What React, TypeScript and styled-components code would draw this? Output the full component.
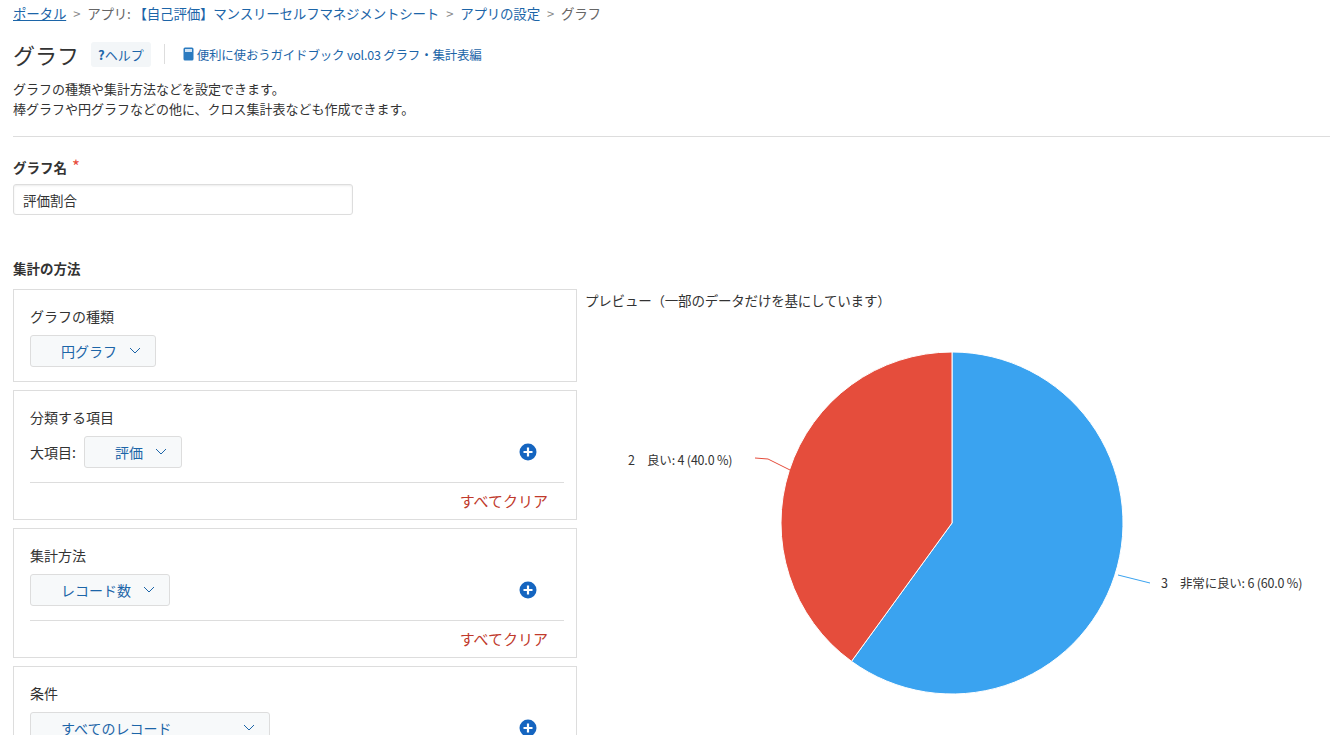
import React from "react";
import styled, { createGlobalStyle } from "styled-components";

const G = createGlobalStyle`
  body { margin:0; font-family: "Noto Sans CJK JP","Noto Sans",sans-serif; color:#333; background:#fff; }
`;
const Page = styled.div`padding: 0 0 0 13px; height:735px; overflow:hidden;`;
const Crumbs = styled.div`font-size:13.5px; height:26px; display:flex; align-items:center; gap:7px; color:#666; letter-spacing:-0.2px;`;
const Link = styled.a<{u?:boolean}>`color:#1c65a8; text-decoration:${p=>p.u?"underline":"none"};`;
const Sep = styled.span`color:#888; font-size:13px;`;
const TitleRow = styled.div`display:flex; align-items:center; margin-top:10px; height:36px;`;
const H1 = styled.h1`font-size:22px; font-weight:400; margin:0 12px 0 0; color:#333;`;
const Help = styled.span`background:#f3f6f8; color:#1c65a8; font-size:13px; padding:3px 7px; border-radius:3px;`;
const VSep = styled.span`width:1px; height:20px; background:#ddd; margin:0 18px 0 13px;`;
const Guide = styled.span`color:#1c65a8; font-size:12.5px; display:flex; align-items:center; gap:3px; letter-spacing:-0.2px;`;
const Desc = styled.p`font-size:13px; line-height:20px; margin:7px 0 0; color:#333;`;
const Hr = styled.hr`border:0; border-top:1px solid #ddd; margin:17px 0 0;`;
const Label = styled.div`font-size:13.5px; font-weight:700; margin-top:16px; color:#333;`;
const Star = styled.span`color:#e74c3c; font-weight:400; margin-left:5px; font-size:17px;`;
const Input = styled.div`width:340px; height:31px; border:1px solid #ddd; border-radius:3px; margin-top:6px; box-sizing:border-box; font-size:13.5px; padding:0 9px; display:flex; align-items:center; box-shadow: inset 0 1px 2px rgba(0,0,0,.08);`;
const Main = styled.div`display:flex; gap:8px; margin-top:11px;`;
const Left = styled.div`width:564px; display:flex; flex-direction:column; gap:8px;`;
const Card = styled.div`border:1px solid #ddd; padding:16px 12px 0 16px; box-sizing:border-box;`;
const CardTitle = styled.div`font-size:14px; color:#333; margin-bottom:9px;`;
const Row = styled.div`display:flex; align-items:center; justify-content:space-between; padding-right:27px; padding-bottom:14px;`;
const RowL = styled.div`display:flex; align-items:center; gap:8px; font-size:14px;`;
const Select = styled.div<{w:number}>`width:${p=>p.w}px; height:32px; box-sizing:border-box; border:1px solid #ddd; border-radius:3px; background:#f7f9fa; color:#1c65a8; font-size:14px; display:flex; align-items:center; justify-content:flex-end; padding-right:14px; gap:12px;`;
const Clear = styled.div`border-top:1px solid #ddd; text-align:right; color:#c0392b; font-size:15px; line-height:20px; padding:8px 16px 8px 0;`;
const Right = styled.div`flex:1; font-size:13.5px; padding-top:1px; letter-spacing:-0.2px;`;
const Chev = () => <svg width="12" height="8" viewBox="0 0 12 8"><path d="M1 1l5 5 5-5" fill="none" stroke="#1c65a8" strokeWidth="1"/></svg>;
const Plus = () => <svg width="18" height="18" viewBox="0 0 18 18"><circle cx="9" cy="9" r="8.5" fill="#1565c0"/><path d="M9 4.5v9M4.5 9h9" stroke="#fff" strokeWidth="2.2"/></svg>;

function pt(a:number,r=171){const t=(a-90)*Math.PI/180;return [952+r*Math.cos(t),225+r*Math.sin(t)];}

export default function App(){
  const [bx,by]=pt(216);
  return <><G/><Page>
    <Crumbs><Link u>ポータル</Link><Sep>&gt;</Sep><span>アプリ: <Link>【自己評価】マンスリーセルフマネジメントシート</Link></span><Sep>&gt;</Sep><Link>アプリの設定</Link><Sep>&gt;</Sep><span>グラフ</span></Crumbs>
    <TitleRow><H1>グラフ</H1><Help><b>?</b>ヘルプ</Help><VSep/><Guide><svg width="11" height="14" viewBox="0 0 11 14"><rect x="0.5" y="0.5" width="10" height="13" rx="1.5" fill="#2b7bc0"/><rect x="2" y="2" width="7" height="3" fill="#cfe3f5"/></svg>便利に使おうガイドブック vol.03 グラフ・集計表編</Guide></TitleRow>
    <Desc>グラフの種類や集計方法などを設定できます。<br/>棒グラフや円グラフなどの他に、クロス集計表なども作成できます。</Desc>
    <Hr/>
    <Label>グラフ名<Star>*</Star></Label>
    <Input>評価割合</Input>
    <Label style={{marginTop:43}}>集計の方法</Label>
    <Main>
      <Left>
        <Card><CardTitle>グラフの種類</CardTitle><Row><Select w={126}>円グラフ<Chev/></Select></Row></Card>
        <Card><CardTitle>分類する項目</CardTitle><Row><RowL>大項目:<Select w={98}>評価<Chev/></Select></RowL><Plus/></Row><Clear>すべてクリア</Clear></Card>
        <Card><CardTitle>集計方法</CardTitle><Row><Select w={140}>レコード数<Chev/></Select><Plus/></Row><Clear>すべてクリア</Clear></Card>
        <Card><CardTitle>条件</CardTitle><Row><Select w={240} style={{justifyContent:"space-between",paddingLeft:30}}>すべてのレコード<Chev/></Select><Plus/></Row></Card>
      </Left>
      <Right>プレビュー（一部のデータだけを基にしています）
        <svg width="745" height="420" viewBox="585 295 745 420" style={{display:"block",marginTop:-12}}>
          <g transform="translate(0,295)">
            <path d={`M952 225 L952 54 A171 171 0 1 1 ${bx} ${by} Z`} fill="#3aa3f0" stroke="#fff" strokeWidth="1"/>
            <path d={`M952 225 L${bx} ${by} A171 171 0 0 1 952 54 Z`} fill="#e54d3c" stroke="#fff" strokeWidth="1"/>
            <polyline points="755,160 768,161 790,172" fill="none" stroke="#e54d3c"/>
            <polyline points="1118,277 1150,285" fill="none" stroke="#3aa3f0"/>
            <text x="628" y="167" fontSize="12.5" fill="#333" fontFamily="Noto Sans CJK JP, sans-serif">2　良い: 4 (40.0 %)</text>
            <text x="1161" y="290" fontSize="12.5" fill="#333" fontFamily="Noto Sans CJK JP, sans-serif">3　非常に良い: 6 (60.0 %)</text>
          </g>
        </svg>
      </Right>
    </Main>
  </Page></>;
}
